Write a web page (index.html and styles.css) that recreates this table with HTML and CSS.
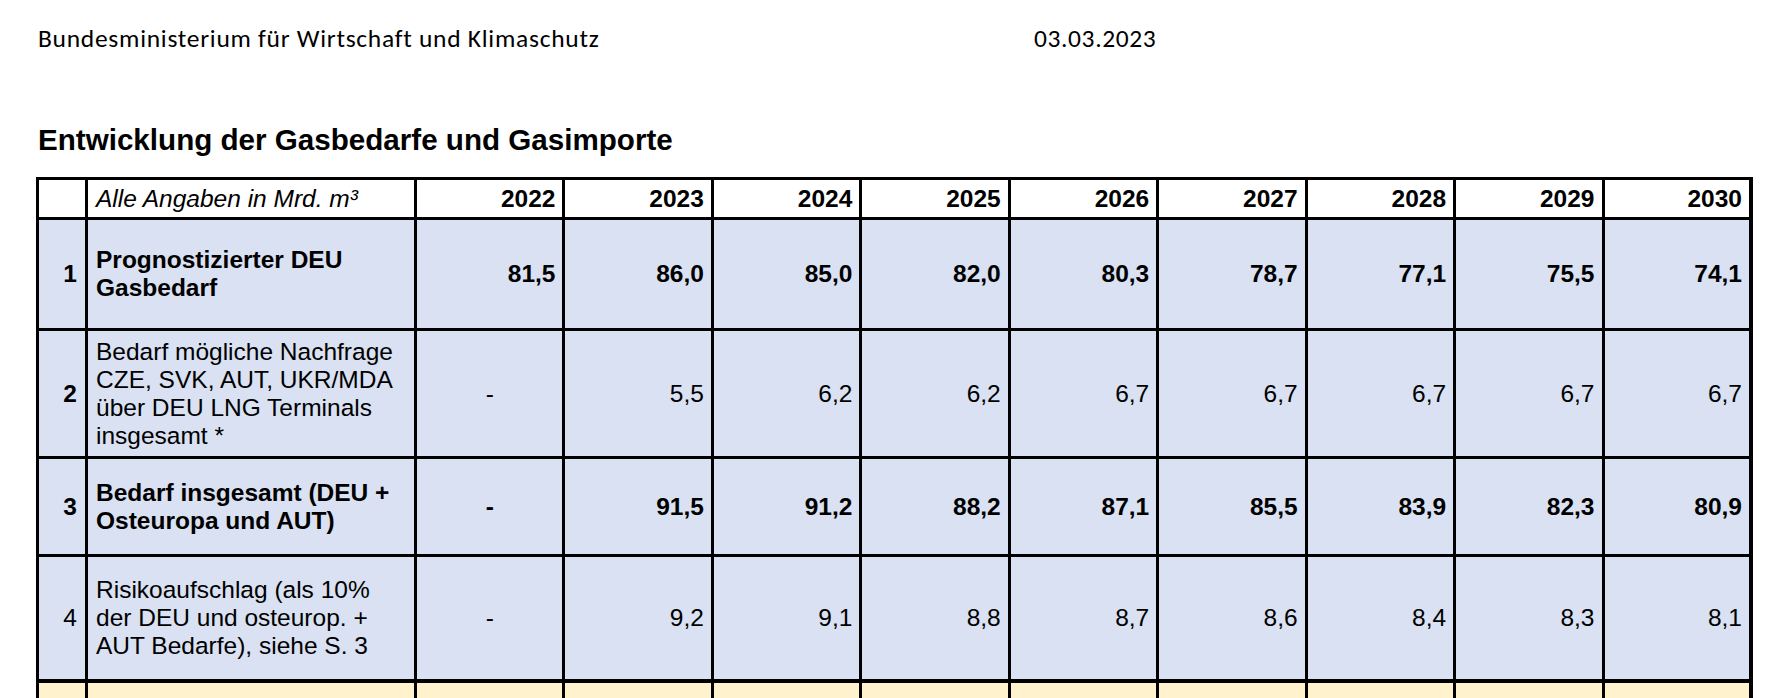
FILE: index.html
```html
<!DOCTYPE html>
<html lang="de">
<head>
<meta charset="utf-8">
<title>Entwicklung der Gasbedarfe und Gasimporte</title>
<link rel="stylesheet" href="styles.css">
</head>
<body>
<div class="page">
  <div class="letterhead">
    <span class="org">Bundesministerium für Wirtschaft und Klimaschutz</span>
    <span class="date">03.03.2023</span>
  </div>
  <h1 class="title">Entwicklung der Gasbedarfe und Gasimporte</h1>
  <table class="data">
    <tr class="head">
      <td class="num w-num"></td>
      <td class="label w-label unit">Alle Angaben in Mrd. m³</td>
      <td class="val">2022</td>
      <td class="val">2023</td>
      <td class="val">2024</td>
      <td class="val">2025</td>
      <td class="val">2026</td>
      <td class="val">2027</td>
      <td class="val">2028</td>
      <td class="val">2029</td>
      <td class="val last">2030</td>
    </tr>
    <tr class="r1 blue bold">
      <td class="num">1</td>
      <td class="label">Prognostizierter DEU<br>Gasbedarf</td>
      <td class="val">81,5</td>
      <td class="val">86,0</td>
      <td class="val">85,0</td>
      <td class="val">82,0</td>
      <td class="val">80,3</td>
      <td class="val">78,7</td>
      <td class="val">77,1</td>
      <td class="val">75,5</td>
      <td class="val last">74,1</td>
    </tr>
    <tr class="r2 blue">
      <td class="num strong">2</td>
      <td class="label">Bedarf mögliche Nachfrage<br>CZE, SVK, AUT, UKR/MDA<br>über DEU LNG Terminals<br>insgesamt *</td>
      <td class="val dash">-</td>
      <td class="val">5,5</td>
      <td class="val">6,2</td>
      <td class="val">6,2</td>
      <td class="val">6,7</td>
      <td class="val">6,7</td>
      <td class="val">6,7</td>
      <td class="val">6,7</td>
      <td class="val last">6,7</td>
    </tr>
    <tr class="r3 blue bold">
      <td class="num">3</td>
      <td class="label">Bedarf insgesamt (DEU +<br>Osteuropa und AUT)</td>
      <td class="val dash">-</td>
      <td class="val">91,5</td>
      <td class="val">91,2</td>
      <td class="val">88,2</td>
      <td class="val">87,1</td>
      <td class="val">85,5</td>
      <td class="val">83,9</td>
      <td class="val">82,3</td>
      <td class="val last">80,9</td>
    </tr>
    <tr class="r4 blue">
      <td class="num">4</td>
      <td class="label">Risikoaufschlag (als 10%<br>der DEU und osteurop. +<br>AUT Bedarfe), siehe S. 3</td>
      <td class="val dash">-</td>
      <td class="val">9,2</td>
      <td class="val">9,1</td>
      <td class="val">8,8</td>
      <td class="val">8,7</td>
      <td class="val">8,6</td>
      <td class="val">8,4</td>
      <td class="val">8,3</td>
      <td class="val last">8,1</td>
    </tr>
    <tr class="r5 yellow">
      <td class="num"></td>
      <td class="label"></td>
      <td class="val"></td>
      <td class="val"></td>
      <td class="val"></td>
      <td class="val"></td>
      <td class="val"></td>
      <td class="val"></td>
      <td class="val"></td>
      <td class="val"></td>
      <td class="val last"></td>
    </tr>
  </table>
</div>
</body>
</html>
```

FILE: styles.css
```css
html, body {
  margin: 0;
  padding: 0;
  background: #ffffff;
  color: #000000;
}

.page {
  padding: 23px 0 0 36px;
}

.letterhead {
  display: grid;
  grid-template-columns: 996px auto;
  font-family: Calibri, Carlito, Lato, "Liberation Sans", sans-serif;
  font-size: 25.5px;
  line-height: 32px;
  padding-left: 2px;
}

.org {
  letter-spacing: 0.72px;
}

.date {
  letter-spacing: 0.6px;
}

.title {
  margin: 68px 0 0 0;
  padding-left: 2px;
  font-family: Arial, "Liberation Sans", sans-serif;
  font-weight: bold;
  font-size: 29.6px;
  line-height: 34px;
}

.data {
  margin-top: 20px;
  border-collapse: separate;
  border-spacing: 0;
  table-layout: fixed;
  width: 1717px;
  border-top: 3px solid #000;
  border-left: 3px solid #000;
  font-family: Arial, "Liberation Sans", sans-serif;
  font-size: 24.5px;
  line-height: 28px;
}

.data td {
  box-sizing: border-box;
  border-right: 3px solid #000;
  border-bottom: 3px solid #000;
  padding: 0 7px 0 8px;
  vertical-align: middle;
  white-space: nowrap;
  overflow: hidden;
}

.data td.last {
  border-right-width: 4px;
}

.w-num { width: 49px; }
.w-label { width: 329px; }

.num {
  text-align: right;
}

.data td.num {
  padding-right: 8px;
}

.label {
  text-align: left;
}

.val {
  text-align: right;
}

.data td.dash {
  text-align: center;
  padding: 0;
}

.unit {
  font-style: italic;
}

.head td { font-weight: bold; }
.head td.unit { font-weight: normal; }

.bold td { font-weight: bold; }
.strong { font-weight: bold; }

.blue td { background: #d9e1f2; }
.yellow td { background: #fff2cc; }

.head { height: 40px; }
.r1 { height: 111px; }
.r2 { height: 128px; }
.r3 { height: 98px; }
.r4 { height: 126px; }
.r4 td { border-bottom-width: 4px; }
.r5 { height: 120px; }
```
